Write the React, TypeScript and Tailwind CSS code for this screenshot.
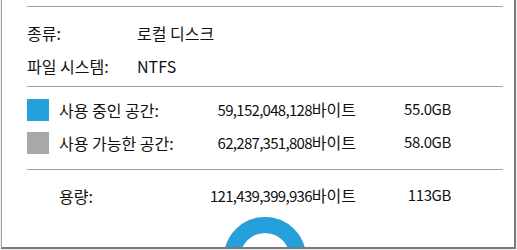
const FONT = "font-['Noto_Sans_CJK_KR','Noto_Sans',sans-serif]";

const usage = [
  { label: "사용 중인 공간:", bytes: "59,152,048,128", size: "55.0GB", color: "bg-[#26a0da]" },
  { label: "사용 가능한 공간:", bytes: "62,287,351,808", size: "58.0GB", color: "bg-[#a8a8a8]" },
];

function Divider() {
  return <div className="h-px w-full bg-[#a0a0a0]" />;
}

function Bytes({ value }: { value: string }) {
  return (
    <span className="w-[172px] text-right">
      <span className="text-[15px] tracking-[-0.7px]">{value}</span>바이트
    </span>
  );
}

export default function App() {
  return (
    <div className={`h-[250px] w-[517px] overflow-hidden bg-[#f0f0f0] ${FONT}`}>
      <div className="ml-px h-[249px] w-[515px] overflow-hidden border-b-2 border-l border-r-2 border-b-[#7a7a7a] border-l-[#a0a0a0] border-r-[#7a7a7a] bg-white pl-[25px] pr-[11px] text-[16px] text-[#111]">
        <div className="pt-[6px]">
          <Divider />
        </div>

        <div className="pt-[9px]">
          <div className="flex h-[33px] items-center">
            <span className="w-[110px]">종류:</span>
            <span>로컬 디스크</span>
          </div>
          <div className="flex h-[33px] items-center">
            <span className="w-[110px]">파일 시스템:</span>
            <span>NTFS</span>
          </div>
        </div>

        <div className="pt-[4px]">
          <Divider />
        </div>

        <div className="pt-[6px]">
          {usage.map((u) => (
            <div key={u.label} className="flex h-[33px] items-center">
              <span className={`mr-[10px] h-[22px] w-[22px] ${u.color}`} />
              <span className="w-[125px]">{u.label}</span>
              <Bytes value={u.bytes} />
              <span className="w-[95px] text-right text-[15px] tracking-[-0.4px]">{u.size}</span>
            </div>
          ))}
        </div>

        <div className="pt-[10px]">
          <Divider />
        </div>

        <div className="pt-[9px]">
          <div className="flex h-[33px] items-center">
            <span className="w-[32px]" />
            <span className="w-[125px]">용량:</span>
            <Bytes value="121,439,399,936" />
            <span className="w-[95px] text-right text-[15px] tracking-[-0.4px]">113GB</span>
          </div>
        </div>

        <div className="flex justify-center pt-[5px]">
          <svg width="82" height="82" viewBox="0 0 82 82">
            <circle cx="41" cy="41" r="33" fill="none" stroke="#a8a8a8" strokeWidth="16" />
            <circle
              cx="41"
              cy="41"
              r="33"
              fill="none"
              stroke="#26a0da"
              strokeWidth="16"
              strokeDasharray="104 208"
              transform="rotate(180 41 41)"
            />
          </svg>
        </div>
      </div>
    </div>
  );
}
